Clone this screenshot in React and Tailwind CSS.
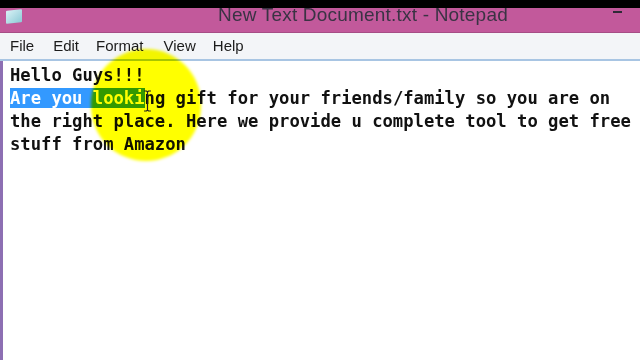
import React from 'react';

const mono = { fontFamily: '"DejaVu Sans Mono", monospace' };

export default function App() {
  return (
    <div className="relative w-[640px] h-[360px] overflow-hidden bg-white flex flex-col" style={{ fontFamily: '"Liberation Sans", Arial, sans-serif' }}>
      {/* black strip above the window */}
      <div className="h-[8px] bg-black shrink-0" />

      {/* title bar */}
      <div className="h-[24px] shrink-0 bg-[#c2599b] flex items-start">
        <div className="ml-[6px] mt-[2px] w-[16px] h-[13px] rounded-[1px] bg-gradient-to-br from-[#d9f2f6] to-[#8ccad6] -skew-y-6" />
        <div className="ml-[196px] -mt-[3px] text-[19px] leading-none text-[#3a3344] tracking-[0.2px]">
          New Text Document.txt - Notepad
        </div>
        <div className="ml-auto mr-[18px] mt-[3px] w-[9px] h-[2px] bg-[#2e2a36]" />
      </div>
      <div className="h-px shrink-0 bg-[#a64d86]" />

      {/* menu bar */}
      <div className="h-[26px] shrink-0 bg-[#f3f5f8] flex items-center text-[15px] text-[#1b1b1b]">
        <span className="ml-[10px]">File</span>
        <span className="ml-[19px]">Edit</span>
        <span className="ml-[17px]">Format</span>
        <span className="ml-[20px]">View</span>
        <span className="ml-[17px]">Help</span>
      </div>
      <div className="h-[2px] shrink-0 bg-[#a8c5e3]" />

      {/* text area */}
      <div className="flex-1 flex">
        <div className="w-[3px] bg-[#8d6fb3]" />
        <div className="pl-[7px] pt-[3px] text-[17.2px] leading-[23px] font-bold text-[#111] whitespace-pre" style={mono}>
          <div>Hello Guys!!!</div>
          <div>
            <span className="bg-[#3399ff] text-white">Are you looki</span>ng gift for your friends/family so you are on
          </div>
          <div>the right place. Here we provide u complete tool to get free</div>
          <div>stuff from Amazon</div>
        </div>
      </div>

      {/* mouse highlight circle */}
      <div className="absolute left-[91px] top-[49px] w-[110px] h-[112px] rounded-full bg-[#ffff00] mix-blend-multiply blur-[1.5px]" />

      {/* I-beam cursor */}
      <svg className="absolute left-[143px] top-[90px]" width="9" height="22" viewBox="0 0 9 22">
        <path d="M1 1h2.5l1 1 1-1H8M4.5 2v18M1 21h2.5l1-1 1 1H8" stroke="#222" strokeWidth="1.2" fill="none" />
      </svg>
    </div>
  );
}
